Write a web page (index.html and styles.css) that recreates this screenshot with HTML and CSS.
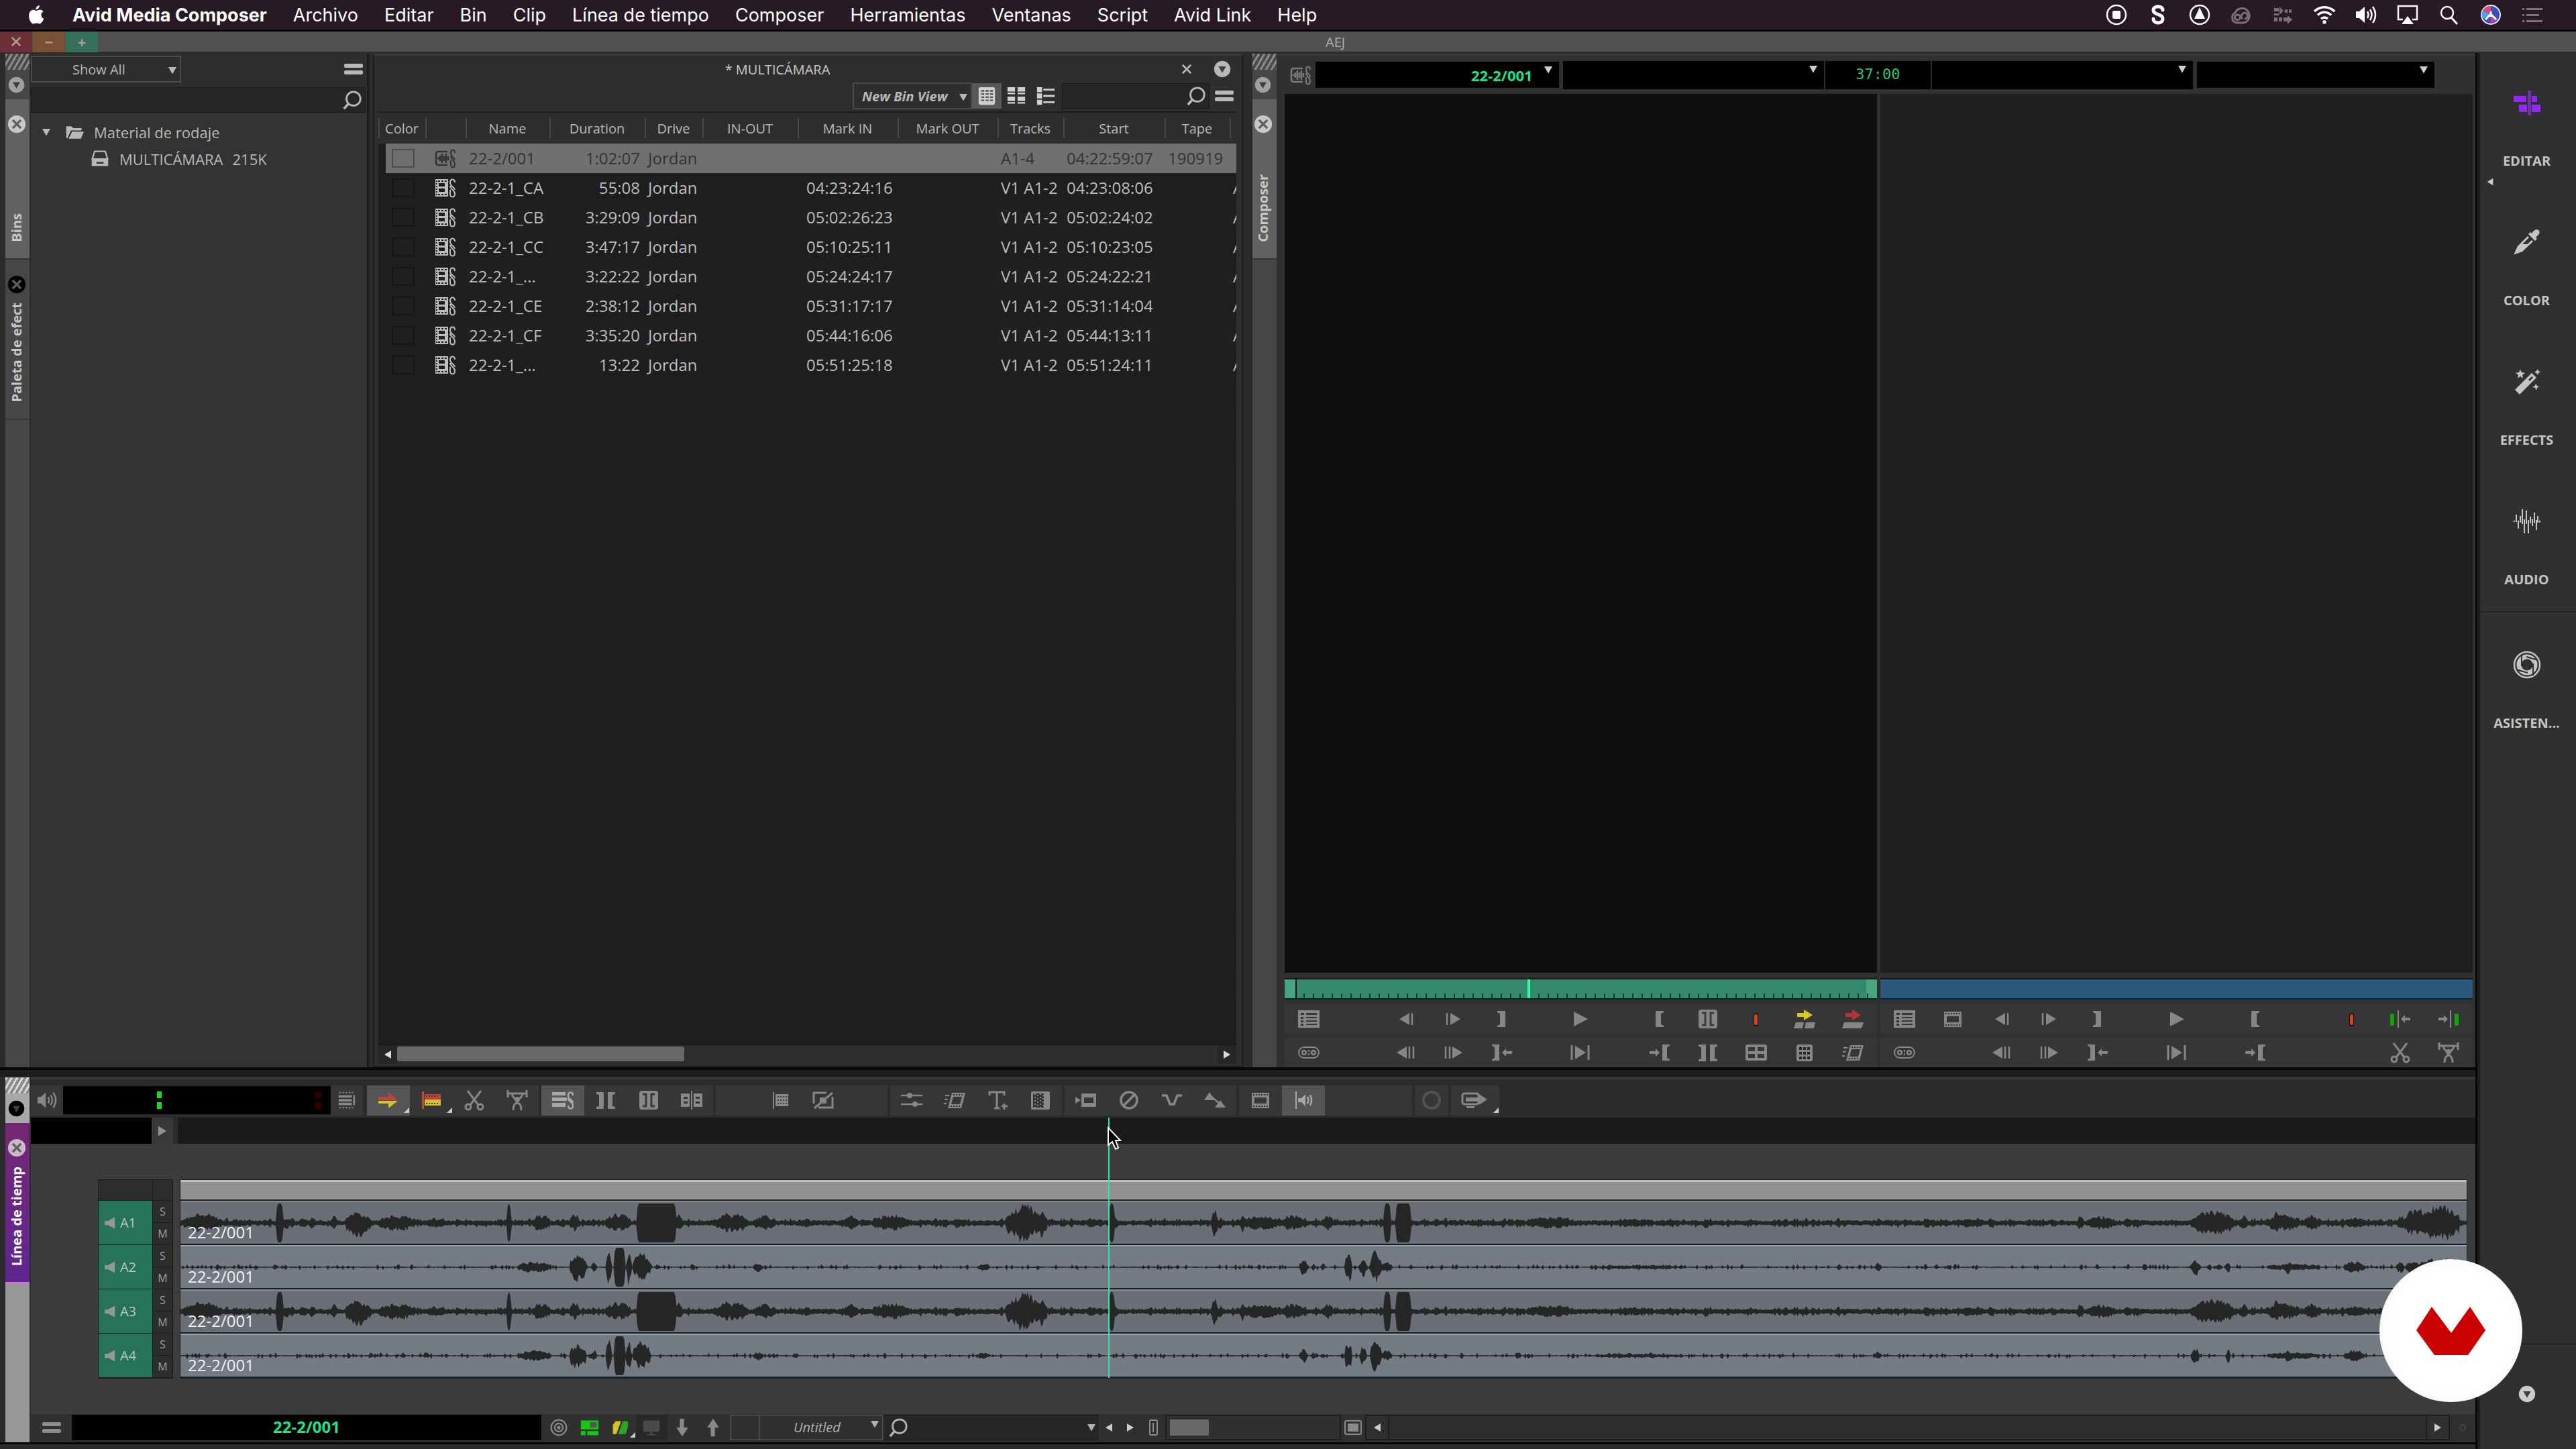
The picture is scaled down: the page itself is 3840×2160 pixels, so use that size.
FILE: index.html
```html
<!DOCTYPE html>
<html lang="es">
<head>
    <meta charset="UTF-8">
    <meta name="viewport" content="width=device-width, initial-scale=1.0">
    <title>Avid Media Composer</title>
    <link rel="stylesheet" href="styles.css">
</head>
<body>
    <!-- icon sheet -->
    <svg class="sheet" aria-hidden="true">
        <symbol id="i-apple" viewBox="0 0 32 32"><path d="M21 2c0 3-2.500 6-5.500 6C15 5 18 2.300 21 2zM16 10c1.500 0 3-1.500 5.500-1.500 2 0 4 1 5 2.800-4.500 2.700-3.700 8.700.8 10.500-1 3-3.500 7.700-6.300 7.700-1.700 0-2.500-1-4.500-1s-3 1-4.500 1C8.500 29.500 5 23 5 17.500c0-5.500 3.300-9 7-9 2 0 3 1.500 4 1.500z"/></symbol>
        <symbol id="i-stop" viewBox="0 0 32 32"><circle cx="16" cy="16" r="14" fill="none" stroke="currentColor" stroke-width="2.500"/><rect x="10" y="10" width="12" height="12" rx="2"/></symbol>
        <symbol id="i-s" viewBox="0 0 32 32"><path d="M23 9c0-7-14-7-14 0 0 8 14 5 14 13 0 8-14 8-14 0" fill="none" stroke="currentColor" stroke-width="5" stroke-linecap="round"/></symbol>
        <symbol id="i-up" viewBox="0 0 32 32"><circle cx="16" cy="16" r="14" fill="none" stroke="currentColor" stroke-width="2.500"/><path d="M16 5l8 17H8z"/></symbol>
        <symbol id="i-cloud" viewBox="0 0 32 32"><path d="M9 28a8 8 0 0 1-2-15A11 11 0 1 1 20 28z" fill="none" stroke="currentColor" stroke-width="3"/><path d="M18 22l-5-5a4 4 0 1 0-3 7c6 0 5-11 11-11a4 4 0 1 1 0 9" fill="none" stroke="currentColor" stroke-width="3"/></symbol>
        <symbol id="i-arrows" viewBox="0 0 32 32"><path d="M3 6h7v5H3zM3 14h7v3H3zM19 8h4v5h-4zM25 8h4v5h-4zM3 20h5v6H3zM10 20h5v6h-5zM17 20h6v-3l7 6-7 7v-4h-6zM11 4l6 6-6 6z"/></symbol>
        <symbol id="i-wifi" viewBox="0 0 32 32"><path d="M1 11a21 21 0 0 1 30 0M6 16.500a14 14 0 0 1 20 0M11 22a7 7 0 0 1 10 0" fill="none" stroke="currentColor" stroke-width="3.500"/><circle cx="16" cy="27" r="2.800"/></symbol>
        <symbol id="i-vol" viewBox="0 0 32 32"><path d="M1 11h5l8-7v24l-8-7H1z"/><path d="M18 11q3 5 0 10M22 8q5 8 0 16M26 4q8 12 0 24" fill="none" stroke="currentColor" stroke-width="2.500"/></symbol>
        <symbol id="i-spk" viewBox="0 0 32 32"><path d="M2 11h8L26 2v28l-16-9H2z"/></symbol>
        <symbol id="i-airplay" viewBox="0 0 32 32"><path d="M9 23H2V3h28v20h-7" fill="none" stroke="currentColor" stroke-width="2.500"/><path d="M16 18l9 12H7z"/></symbol>
        <symbol id="i-find" viewBox="0 0 32 32"><circle cx="13" cy="13" r="9" fill="none" stroke="currentColor" stroke-width="2.500"/><path d="M19 20l9 10" stroke="currentColor" stroke-width="3"/></symbol>
        <symbol id="i-siri" viewBox="0 0 32 32"><circle cx="16" cy="16" r="14" fill="#3d4fb8" stroke="#e8e8f0" stroke-width="2"/><path d="M16 16L4 10a13 13 0 0 1 12-7z" fill="#e0457f"/><path d="M16 16L4 22a13 13 0 0 1 0-12z" fill="#4aa6e8"/><path d="M16 16L27 22a13 13 0 0 1-11 7z" fill="#b0449c"/><path d="M16 15l-8 8M16 11v8M16 15l8 8" stroke="#fff" stroke-width="3"/></symbol>
        <symbol id="i-list" viewBox="0 0 32 32"><path d="M1 6h3v3H1zM7 6h24v3H7zM1 15h3v3H1zM7 15h19v3H7zM1 24h3v3H1zM7 24h24v3H7z"/></symbol>
        <symbol id="i-mag" viewBox="0 0 32 32"><circle cx="18" cy="14" r="11" fill="none" stroke="currentColor" stroke-width="3"/><path d="M10 22l-7 8" stroke="currentColor" stroke-width="4"/></symbol>
        <symbol id="i-burger" viewBox="0 0 32 32"><rect x="2" y="8" width="28" height="6" rx="2"/><rect x="2" y="18" width="28" height="6" rx="2"/></symbol>
        <symbol id="i-down" viewBox="0 0 32 32"><path d="M4 6h24L16 27z"/></symbol>
        <symbol id="i-left" viewBox="0 0 32 32"><path d="M26 4v24L6 16z"/></symbol>
        <symbol id="i-right" viewBox="0 0 32 32"><path d="M6 4v24l20-12z"/></symbol>
        <symbol id="i-discdown" viewBox="0 0 32 32"><circle cx="16" cy="16" r="15"/><path class="cut" d="M9 11h14l-7 12z"/></symbol>
        <symbol id="i-discx" viewBox="0 0 32 32"><circle cx="16" cy="16" r="15"/><path class="cutline" d="M9 9l14 14M23 9L9 23"/></symbol>
        <symbol id="i-x" viewBox="0 0 32 32"><path d="M6 6l20 20M26 6L6 26" stroke="currentColor" stroke-width="4"/></symbol>
        <symbol id="i-folder" viewBox="0 0 32 32"><path d="M2 6h9l3 3h14v4H10L4 26H2z"/><path d="M12 15h20l-5 12H6z"/></symbol>
        <symbol id="i-bin" viewBox="0 0 32 32"><path d="M7 3h18l4 13H3z" fill="none" stroke="currentColor" stroke-width="2.500"/><path d="M2 16h28v12H2z"/><path d="M10 21h12v3H10z" fill="#333"/></symbol>
        <symbol id="i-vtext" viewBox="0 0 32 32"><rect x="3" y="2" width="26" height="28" rx="3"/><path d="M7 8h5M14 8h5M21 8h5M7 13h5M14 13h5M21 13h5M7 18h5M14 18h5M21 18h5M7 23h5M14 23h5M21 23h5" stroke="#555" stroke-width="2.500"/></symbol>
        <symbol id="i-vframe" viewBox="0 0 32 32"><path d="M2 2h12v7H2zM18 2h12v7H18zM2 17h12v7H2zM18 17h12v7H18z"/><path d="M2 12h12M18 12h12M2 27h12M18 27h12" stroke="currentColor" stroke-width="2.500"/></symbol>
        <symbol id="i-vscript" viewBox="0 0 32 32"><path d="M2 2h8v8H2zM2 12h8v8H2zM2 22h8v8H2z"/><path d="M12 6h18M12 16h18M12 26h18" stroke="currentColor" stroke-width="3"/></symbol>
        <symbol id="i-clip" viewBox="0 0 32 32"><path fill-rule="evenodd" d="M1 3h19v26H1zM6 9v5h9V9zM6 17v5h9v-5z"/><path d="M3 5v22" stroke="#222" stroke-width="2" stroke-dasharray="2 2"/><path d="M5 6h14M5 26h14" stroke="#222" stroke-width="2" stroke-dasharray="3 2"/><path d="M30 8c0-6-7-6-7 0 0 7 7 6 7 11M23 13c0 6 7 5 7 12 0 6-7 6-7 0v-6" fill="none" stroke="currentColor" stroke-width="2"/></symbol>
        <symbol id="i-aclip" viewBox="0 0 32 32"><path d="M19 6H5a3 3 0 0 0-3 3v14a3 3 0 0 0 3 3h14" fill="none" stroke="currentColor" stroke-width="2.500"/><path d="M4 16h3M8 12v8M11 9v14M14 12v8M17 9v14M20 13v6" stroke="currentColor" stroke-width="2.500"/><path d="M30 8c0-6-6-6-6 0 0 7 6 6 6 11M24 13c0 6 6 5 6 12 0 6-6 6-6 0v-6" fill="none" stroke="currentColor" stroke-width="2"/></symbol>
        <symbol id="i-menu" viewBox="0 0 32 32"><path fill-rule="evenodd" d="M0 3h32v26H0zM4 7v3h5V7zM12 7v3h16V7zM4 13v3h4v-3zM4 18v3h4v-3zM4 23v3h4v-3zM12 13v2h16v-2zM12 18v2h16v-2zM12 23v2h16v-2z"/></symbol>
        <symbol id="i-stepb" viewBox="0 0 32 32"><path d="M22 7v18L7 16z"/><path d="M26 7v18" stroke="currentColor" stroke-width="2.500"/></symbol>
        <symbol id="i-stepf" viewBox="0 0 32 32"><path d="M11 7v18l15-9z"/><path d="M6 7v18" stroke="currentColor" stroke-width="2.500"/></symbol>
        <symbol id="i-step2b" viewBox="0 0 32 32"><path d="M18 7v18L3 16z"/><path d="M22 7v18M28 7v18" stroke="currentColor" stroke-width="2.500"/></symbol>
        <symbol id="i-step2f" viewBox="0 0 32 32"><path d="M14 7v18l15-9z"/><path d="M4 7v18M10 7v18" stroke="currentColor" stroke-width="2.500"/></symbol>
        <symbol id="i-out" viewBox="0 0 32 32"><path d="M9 4h12v24H9v-2l4-2V8L9 6z"/></symbol>
        <symbol id="i-in" viewBox="0 0 32 32"><path d="M22 4H10v24h12v-2l-4-2V8l4-2z"/></symbol>
        <symbol id="i-play" viewBox="0 0 32 32"><path d="M6 5v22l21-11z"/></symbol>
        <symbol id="i-playio" viewBox="0 0 32 32"><path d="M8 6v20l16-10z"/><path d="M3 5v22M28 5v22" stroke="currentColor" stroke-width="3"/></symbol>
        <symbol id="i-goout" viewBox="0 0 32 32"><path d="M1 4h11v24H1v-2l4-2V8L1 6z"/><path d="M16 16l6-6v4h9v4h-9v4z"/></symbol>
        <symbol id="i-goin" viewBox="0 0 32 32"><path d="M31 4H20v24h11v-2l-4-2V8l4-2z"/><path d="M16 16l-6-6v4H1v4h9v4z"/></symbol>
        <symbol id="i-mark" viewBox="0 0 32 32"><rect x="2" y="2" width="28" height="28" rx="4"/><path d="M7 7h5v18H7M25 7h-5v18h5" fill="none" stroke="#3a3a3a" stroke-width="3"/></symbol>
        <symbol id="i-clear" viewBox="0 0 32 32"><path d="M2 4h11v25H2v-3l4-1V8L2 7zM30 4H19v25h11v-3l-4-1V8l4-1z"/></symbol>
        <symbol id="i-marker" viewBox="0 0 32 32"><rect x="12" y="7" width="7" height="20" rx="3" fill="#111"/><rect x="13" y="9" width="5" height="16" rx="2" fill="#d8401a"/></symbol>
        <symbol id="i-splice" viewBox="0 0 32 32"><path d="M5 7h10V2l13 8-13 8v-5H5z" fill="#d8c81e"/><path d="M3 21h12l-2 9H0zM18 21h14l-2 9H16z"/></symbol>
        <symbol id="i-over" viewBox="0 0 32 32"><path d="M5 7h10V2l13 8-13 8v-5H5z" fill="#b83434"/><path d="M3 21h29l-3 9H0z"/></symbol>
        <symbol id="i-gang" viewBox="0 0 32 32"><rect x="1" y="8" width="30" height="16" rx="8" fill="none" stroke="currentColor" stroke-width="2"/><circle cx="9" cy="16" r="3" fill="none" stroke="currentColor" stroke-width="2.500"/><circle cx="23" cy="16" r="3" fill="none" stroke="currentColor" stroke-width="2.500"/><path d="M15 12h2v3h-2zM15 17h2v3h-2z"/></symbol>
        <symbol id="i-quad" viewBox="0 0 32 32"><path fill-rule="evenodd" d="M3 4h26q3 0 3 3v18q0 3-3 3H3q-3 0-3-3V7q0-3 3-3zM4 8v6h10V8zM18 8v6h10V8zM4 18v6h10v-6zM18 18v6h10v-6z"/></symbol>
        <symbol id="i-nine" viewBox="0 0 32 32"><rect x="4" y="4" width="24" height="25" rx="3"/><path d="M8 10h16M8 17h16M8 24h16" stroke="#262626" stroke-width="4" stroke-dasharray="4 2"/></symbol>
        <symbol id="i-motion" viewBox="0 0 32 32"><path fill-rule="evenodd" d="M12 5h20l-6 23H6zM14 11l-3 11h13l3-11z"/><path d="M14 8h15M10 25h15" stroke="#333" stroke-width="2" stroke-dasharray="2 2"/><path d="M2 9h6M1 15h5M0 21h4" stroke="currentColor" stroke-width="2"/></symbol>
        <symbol id="i-film" viewBox="0 0 32 32"><path fill-rule="evenodd" d="M3 5h26v23H3zM7 12v9h18v-9z"/><path d="M5 8h22M5 25h22" stroke="#333" stroke-width="2" stroke-dasharray="2 2"/></symbol>
        <symbol id="i-trimout" viewBox="0 0 32 32"><rect x="1" y="8" width="6" height="18" rx="3" fill="#12a512"/><path d="M12 3h2v26h-2zM17 16l6-6v4h8v4h-8v4z"/></symbol>
        <symbol id="i-trimin" viewBox="0 0 32 32"><rect x="25" y="8" width="6" height="18" rx="3" fill="#12a512"/><path d="M18 3h2v26h-2zM15 16l-6-6v4H1v4h8v4z"/></symbol>
        <symbol id="i-cut" viewBox="0 0 32 32"><path d="M6 2l16 21M26 2L10 23" stroke="currentColor" stroke-width="3"/><circle cx="7" cy="26" r="4" fill="none" stroke="currentColor" stroke-width="3"/><circle cx="25" cy="26" r="4" fill="none" stroke="currentColor" stroke-width="3"/></symbol>
        <symbol id="i-lift" viewBox="0 0 32 32"><path d="M2 1v11M30 1v11M1 6h30" stroke="currentColor" stroke-width="3"/><path d="M8 6q1 7 8 9 7-2 8-9M10 31q0-10 6-11 6 1 6 11" fill="none" stroke="currentColor" stroke-width="3"/><circle cx="16" cy="15" r="4"/></symbol>
        <symbol id="i-tracks" viewBox="0 0 32 32"><path d="M3 8h21v4H3zM3 14h21v4H3zM3 20h21v4H3zM26 8h3v16h-3z"/><path d="M4 4h22M4 28h22" stroke="currentColor" stroke-width="2" stroke-dasharray="3 2"/></symbol>
        <symbol id="i-smart" viewBox="0 0 32 32"><path d="M1 11h15V4l14 12H1z" fill="#b84444"/><path d="M1 17h29L16 28v-7H1z" fill="#d4c224"/></symbol>
        <symbol id="i-seg" viewBox="0 0 32 32"><path d="M2 3h3v26H2z" fill="#c05030"/><path d="M6 7h24v8H6z" fill="#b84444"/><path d="M6 15h24v9H6z" fill="#d4c224"/><path d="M8 10h20M8 21h20" stroke="#5a3020" stroke-width="2" stroke-dasharray="2 2"/></symbol>
        <symbol id="i-link" viewBox="0 0 32 32"><path d="M0 4h20v5H0zM0 12h22v5H0zM0 20h20v6H0z"/><path d="M31 9c0-6-7-6-7 0 0 7 7 6 7 11M24 13c0 6 7 5 7 11 0 6-7 6-7 0" fill="none" stroke="currentColor" stroke-width="2.500"/></symbol>
        <symbol id="i-split" viewBox="0 0 32 32"><path fill-rule="evenodd" d="M0 6h13v20H0zM4 11v3h6v-3zM4 18v3h6v-3zM19 6h13v20H19zM22 11v3h6v-3zM22 18v3h6v-3zM15 2h2v28h-2z"/></symbol>
        <symbol id="i-freeze" viewBox="0 0 32 32"><path d="M5 4h2v25H5zM9 7h19v18H9z"/><path d="M12 11h14M12 16h14M12 21h14" stroke="#444" stroke-width="2" stroke-dasharray="2 2"/></symbol>
        <symbol id="i-fade" viewBox="0 0 32 32"><path d="M21 5H2v16M30 11v16H9M3 28L30 5" fill="none" stroke="currentColor" stroke-width="3"/><path d="M11 12h10v9H11z"/></symbol>
        <symbol id="i-sliders" viewBox="0 0 32 32"><path d="M0 9h32M0 22h32" stroke="currentColor" stroke-width="2.500"/><circle cx="13" cy="9" r="4"/><circle cx="21" cy="22" r="4"/></symbol>
        <symbol id="i-title" viewBox="0 0 32 32"><path d="M4 9V4h22v5M15 4v24M11 28h8M26 21v9M22 25h9" fill="none" stroke="currentColor" stroke-width="3"/></symbol>
        <symbol id="i-matte" viewBox="0 0 32 32"><rect x="2" y="3" width="28" height="27" rx="2"/><path d="M5 6h16v21H5z" fill="#333"/><path d="M8 6v21M12 8v19M16 6v21M20 8v19" stroke="currentColor" stroke-width="2" stroke-dasharray="2 3"/></symbol>
        <symbol id="i-cam" viewBox="0 0 32 32"><path fill-rule="evenodd" d="M0 11l8 5-8 5zM9 6h22v20H9zM13 12v8h14v-8z"/></symbol>
        <symbol id="i-no" viewBox="0 0 32 32"><circle cx="16" cy="16" r="12" fill="none" stroke="currentColor" stroke-width="3.500"/><path d="M24 8L8 24" stroke="currentColor" stroke-width="3.500"/></symbol>
        <symbol id="i-v" viewBox="0 0 32 32"><path d="M1 9h7l5 13h6l5-13h7" fill="none" stroke="currentColor" stroke-width="3.500"/></symbol>
        <symbol id="i-tri" viewBox="0 0 32 32"><path d="M8 4l8 12H0zM24 16l8 11H16z"/><path d="M10 10l14 12" stroke="currentColor" stroke-width="2.500"/></symbol>
        <symbol id="i-scrub" viewBox="0 0 32 32"><path d="M4 3h2v26H4zM8 13h5l6-6v18l-6-6H8z"/><path d="M22 11q3 5 0 10M26 8q4 8 0 16" fill="none" stroke="currentColor" stroke-width="2.500"/></symbol>
        <symbol id="i-ring" viewBox="0 0 32 32"><circle cx="16" cy="16" r="12" fill="none" stroke="currentColor" stroke-width="4"/></symbol>
        <symbol id="i-export" viewBox="0 0 40 32"><rect x="1" y="6" width="24" height="16" rx="3" fill="none" stroke="currentColor" stroke-width="3"/><path d="M6 12h20V7l12 8-12 8v-5H6zM7 25h12v3H7z"/></symbol>
        <symbol id="i-target" viewBox="0 0 32 32"><circle cx="16" cy="16" r="13" fill="none" stroke="currentColor" stroke-width="2.500"/><circle cx="16" cy="16" r="7" fill="none" stroke="currentColor" stroke-width="2.500"/><circle cx="16" cy="16" r="3"/></symbol>
        <symbol id="i-render" viewBox="0 0 32 32"><path d="M1 4h30v15H1zM1 22h8v7H1zM12 22h19v7H12z" fill="#14c814"/><path d="M17 7h11v9H17z" fill="#555"/></symbol>
        <symbol id="i-video" viewBox="0 0 32 32"><path d="M8 5h9l-8 22H3V11z" fill="#d4c224"/><path d="M20 5h8l1 8-4 14H12z" fill="#2aa52a"/></symbol>
        <symbol id="i-screen" viewBox="0 0 32 32"><rect x="2" y="4" width="28" height="19" rx="3"/><path d="M14 22h4v5h6v2H8v-2h6z"/></symbol>
        <symbol id="i-adown" viewBox="0 0 32 32"><path d="M12 1h7v15h7l-10 15L6 16h6z"/></symbol>
        <symbol id="i-aup" viewBox="0 0 32 32"><path d="M12 31h7V16h7L16 1 6 16h6z"/></symbol>
        <symbol id="i-zoomout" viewBox="0 0 32 32"><rect x="11" y="5" width="11" height="22" rx="2" fill="none" stroke="currentColor" stroke-width="2"/><path d="M16 9v14" stroke="currentColor" stroke-width="2"/></symbol>
        <symbol id="i-zoomin" viewBox="0 0 32 32"><rect x="4" y="6" width="24" height="20" rx="2" fill="none" stroke="currentColor" stroke-width="2"/><rect x="8" y="10" width="16" height="12"/></symbol>
        <symbol id="i-edit" viewBox="0 0 42 42"><path d="M1 11h19v9H1zM28 11h8v9h-8zM9 24h12v11H9zM28 24h13v11H28z" fill="#9329f5"/><path d="M22 3h5v37h-5z" fill="#6c34a8"/></symbol>
        <symbol id="i-drop" viewBox="0 0 42 42"><path d="M30 5q5-5 8-2 4 3-1 8l-3 3 2 2-3 3-10-10 3-3 2 2z"/><path d="M23 13L8 28l-4 9 9-3 16-15" fill="none" stroke="currentColor" stroke-width="3"/><path d="M11 24h12L13 34l-10 4z"/></symbol>
        <symbol id="i-wand" viewBox="0 0 42 42"><path fill-rule="evenodd" d="M3 33L28 8l7 7-25 25zM28 13l-5 5 2 2 5-5z"/><path d="M11 3l2 4 5 1-4 3 1 5-4-3-4 3 1-5-4-3 5-1zM37 2l1 3 3 1-3 2-1 3-2-3-3-1 3-2zM34 24l2 3 3 1-3 2-1 4-2-4-4-1 4-2z"/></symbol>
        <symbol id="i-audio" viewBox="0 0 42 42"><path d="M1 21h2M5 11v11M8 20v12M11 13v10M14 3v22M17 18v21M20 5v20M23 19v20M26 14v10M29 18v10M32 8v16M35 19v15M37 13v10M40 20v3" stroke="currentColor" stroke-width="2"/></symbol>
        <symbol id="i-iris" viewBox="0 0 42 42"><circle cx="21" cy="21" r="19" fill="none" stroke="currentColor" stroke-width="2.500"/><circle cx="21" cy="21" r="12" fill="none" stroke="currentColor" stroke-width="7"/><path d="M13 5v18M5 28l17 5M30 37V19M37 14l-17-5" stroke="#303030" stroke-width="2"/></symbol>
    </svg>

    <header class="menubar">
        <svg class="apple"><use href="#i-apple"/></svg>
        <nav class="menus">
            <a href="#" class="app">Avid Media Composer</a>
            <a href="#">Archivo</a>
            <a href="#">Editar</a>
            <a href="#">Bin</a>
            <a href="#">Clip</a>
            <a href="#">Línea de tiempo</a>
            <a href="#">Composer</a>
            <a href="#">Herramientas</a>
            <a href="#">Ventanas</a>
            <a href="#">Script</a>
            <a href="#">Avid Link</a>
            <a href="#">Help</a>
        </nav>
        <div class="status">
            <svg><use href="#i-stop"/></svg>
            <svg><use href="#i-s"/></svg>
            <svg><use href="#i-up"/></svg>
            <svg class="dim"><use href="#i-cloud"/></svg>
            <svg class="dim"><use href="#i-arrows"/></svg>
            <svg><use href="#i-wifi"/></svg>
            <svg><use href="#i-vol"/></svg>
            <svg><use href="#i-airplay"/></svg>
            <svg><use href="#i-find"/></svg>
            <svg><use href="#i-siri"/></svg>
            <svg class="dim"><use href="#i-list"/></svg>
        </div>
    </header>

    <div class="titlebar">
        <div class="winbtns">
            <button class="close" aria-label="Cerrar"><svg><use href="#i-x"/></svg></button>
            <button class="min" aria-label="Minimizar">−</button>
            <button class="max" aria-label="Maximizar">+</button>
        </div>
        <span class="title">AEJ</span>
    </div>

    <div class="shell">
        <main class="work">
            <div class="panes">
                <div class="rail">
                    <div class="grip"></div>
                    <div class="railmenu"><svg><use href="#i-discdown"/></svg></div>
                    <div class="tab active"><svg><use href="#i-discx"/></svg><span>Bins</span></div>
                    <div class="tab"><svg class="black"><use href="#i-discx"/></svg><span>Paleta de efect</span></div>
                </div>

                <section class="bins">
                    <div class="binbar">
                        <div class="drop showall">
                            <select aria-label="Filtro"><option>Show All</option></select>
                            <svg><use href="#i-down"/></svg>
                        </div>
                        <button class="icon" aria-label="Menú"><svg><use href="#i-burger"/></svg></button>
                    </div>
                    <label class="search"><input type="text" aria-label="Buscar bins"><svg><use href="#i-mag"/></svg></label>
                    <ul class="tree">
                        <li><svg class="tri"><use href="#i-down"/></svg><svg><use href="#i-folder"/></svg>Material de rodaje</li>
                        <li class="child"><svg><use href="#i-bin"/></svg>MULTICÁMARA<span>215K</span></li>
                    </ul>
                </section>

                <section class="binwin">
                    <div class="bintitle">
                        <h2>* MULTICÁMARA</h2>
                        <button class="icon" aria-label="Cerrar bin"><svg class="small"><use href="#i-x"/></svg></button>
                        <button class="icon" aria-label="Opciones"><svg class="mid"><use href="#i-discdown"/></svg></button>
                    </div>
                    <div class="viewbar">
                        <div class="drop view">
                            <select aria-label="Vista"><option>New Bin View</option></select>
                            <svg><use href="#i-down"/></svg>
                        </div>
                        <button class="vbtn on" aria-label="Texto"><svg><use href="#i-vtext"/></svg></button>
                        <button class="vbtn" aria-label="Fotogramas"><svg><use href="#i-vframe"/></svg></button>
                        <button class="vbtn" aria-label="Guion"><svg><use href="#i-vscript"/></svg></button>
                        <label class="search binsearch"><input type="text" aria-label="Buscar clips"><svg><use href="#i-mag"/></svg></label>
                        <button class="icon" aria-label="Menú del bin"><svg><use href="#i-burger"/></svg></button>
                    </div>
                    <div class="cliplist">
                        <table>
                            <colgroup>
                                <col class="c-color"><col class="c-icon"><col class="c-name"><col class="c-dur"><col class="c-drive"><col class="c-io"><col class="c-mark"><col class="c-mark"><col class="c-tracks"><col class="c-start"><col class="c-tape"><col>
                            </colgroup>
                            <thead>
                                <tr><th>Color</th><th></th><th>Name</th><th>Duration</th><th>Drive</th><th>IN-OUT</th><th>Mark IN</th><th>Mark OUT</th><th>Tracks</th><th>Start</th><th>Tape</th><th></th></tr>
                            </thead>
                            <tbody>
                                <tr class="sel"><td><i></i></td><td><svg><use href="#i-aclip"/></svg></td><td>22-2/001</td><td class="num">1:02:07</td><td>Jordan</td><td></td><td></td><td></td><td>A1-4</td><td>04:22:59:07</td><td>190919</td><td></td></tr>
                                <tr><td><i></i></td><td><svg><use href="#i-clip"/></svg></td><td>22-2-1_CA</td><td class="num">55:08</td><td>Jordan</td><td></td><td class="mark">04:23:24:16</td><td></td><td>V1 A1-2</td><td>04:23:08:06</td><td></td><td>A</td></tr>
                                <tr><td><i></i></td><td><svg><use href="#i-clip"/></svg></td><td>22-2-1_CB</td><td class="num">3:29:09</td><td>Jordan</td><td></td><td class="mark">05:02:26:23</td><td></td><td>V1 A1-2</td><td>05:02:24:02</td><td></td><td>A</td></tr>
                                <tr><td><i></i></td><td><svg><use href="#i-clip"/></svg></td><td>22-2-1_CC</td><td class="num">3:47:17</td><td>Jordan</td><td></td><td class="mark">05:10:25:11</td><td></td><td>V1 A1-2</td><td>05:10:23:05</td><td></td><td>A</td></tr>
                                <tr><td><i></i></td><td><svg><use href="#i-clip"/></svg></td><td>22-2-1_...</td><td class="num">3:22:22</td><td>Jordan</td><td></td><td class="mark">05:24:24:17</td><td></td><td>V1 A1-2</td><td>05:24:22:21</td><td></td><td>A</td></tr>
                                <tr><td><i></i></td><td><svg><use href="#i-clip"/></svg></td><td>22-2-1_CE</td><td class="num">2:38:12</td><td>Jordan</td><td></td><td class="mark">05:31:17:17</td><td></td><td>V1 A1-2</td><td>05:31:14:04</td><td></td><td>A</td></tr>
                                <tr><td><i></i></td><td><svg><use href="#i-clip"/></svg></td><td>22-2-1_CF</td><td class="num">3:35:20</td><td>Jordan</td><td></td><td class="mark">05:44:16:06</td><td></td><td>V1 A1-2</td><td>05:44:13:11</td><td></td><td>A</td></tr>
                                <tr><td><i></i></td><td><svg><use href="#i-clip"/></svg></td><td>22-2-1_...</td><td class="num">13:22</td><td>Jordan</td><td></td><td class="mark">05:51:25:18</td><td></td><td>V1 A1-2</td><td>05:51:24:11</td><td></td><td>A</td></tr>
                            </tbody>
                        </table>
                    </div>
                    <div class="hscroll">
                        <button aria-label="Izquierda"><svg><use href="#i-left"/></svg></button>
                        <div class="track"><div class="thumb"></div></div>
                        <button aria-label="Derecha"><svg><use href="#i-right"/></svg></button>
                    </div>
                </section>

                <div class="rail second">
                    <div class="grip"></div>
                    <div class="railmenu"><svg><use href="#i-discdown"/></svg></div>
                    <div class="tab active"><svg><use href="#i-discx"/></svg><span>Composer</span></div>
                </div>

                <section class="composer">
                    <div class="comphead">
                        <svg class="clipicon"><use href="#i-aclip"/></svg>
                        <div class="drop box b1"><select class="green" aria-label="Clip"><option>22-2/001</option></select><svg><use href="#i-down"/></svg></div>
                        <div class="drop box tall b2"><select aria-label="Pista de origen"><option></option></select><svg><use href="#i-down"/></svg></div>
                        <output class="tc">37:00</output>
                        <div class="drop box tall b3"><select aria-label="Pista de secuencia"><option></option></select><svg><use href="#i-down"/></svg></div>
                        <div class="drop box b4"><select aria-label="Secuencia"><option></option></select><svg><use href="#i-down"/></svg></div>
                    </div>
                    <div class="monitors">
                        <div class="monitor">
                            <div class="screen src"></div>
                            <div class="posbar green-bar"><span class="pos"></span></div>
                            <div class="btnrow">
                                <button aria-label="Menú rápido"><svg><use href="#i-menu"/></svg></button>
                                <span></span>
                                <button aria-label="Paso atrás"><svg><use href="#i-stepb"/></svg></button>
                                <button aria-label="Paso adelante"><svg><use href="#i-stepf"/></svg></button>
                                <button aria-label="Marcar salida"><svg><use href="#i-out"/></svg></button>
                                <button aria-label="Reproducir"><svg><use href="#i-play"/></svg></button>
                                <button aria-label="Marcar entrada"><svg><use href="#i-in"/></svg></button>
                                <button aria-label="Marcar clip"><svg><use href="#i-mark"/></svg></button>
                                <button aria-label="Marcador"><svg><use href="#i-marker"/></svg></button>
                                <button aria-label="Insertar"><svg><use href="#i-splice"/></svg></button>
                                <button aria-label="Sobrescribir"><svg><use href="#i-over"/></svg></button>
                            </div>
                            <div class="btnrow">
                                <button aria-label="Agrupar"><svg><use href="#i-gang"/></svg></button>
                                <span></span>
                                <button aria-label="Diez atrás"><svg><use href="#i-step2b"/></svg></button>
                                <button aria-label="Diez adelante"><svg><use href="#i-step2f"/></svg></button>
                                <button aria-label="Ir a salida"><svg><use href="#i-goout"/></svg></button>
                                <button aria-label="Reproducir entre marcas"><svg><use href="#i-playio"/></svg></button>
                                <button aria-label="Ir a entrada"><svg><use href="#i-goin"/></svg></button>
                                <button aria-label="Borrar marcas"><svg><use href="#i-clear"/></svg></button>
                                <button aria-label="Cuatro cámaras"><svg><use href="#i-quad"/></svg></button>
                                <button aria-label="Nueve cámaras"><svg><use href="#i-nine"/></svg></button>
                                <button aria-label="Efecto de movimiento"><svg><use href="#i-motion"/></svg></button>
                            </div>
                        </div>
                        <div class="monitor">
                            <div class="screen rec"></div>
                            <div class="posbar blue-bar"></div>
                            <div class="btnrow">
                                <button aria-label="Menú rápido"><svg><use href="#i-menu"/></svg></button>
                                <button aria-label="Película"><svg><use href="#i-film"/></svg></button>
                                <button aria-label="Paso atrás"><svg><use href="#i-stepb"/></svg></button>
                                <button aria-label="Paso adelante"><svg><use href="#i-stepf"/></svg></button>
                                <button aria-label="Marcar salida"><svg><use href="#i-out"/></svg></button>
                                <button aria-label="Reproducir"><svg><use href="#i-play"/></svg></button>
                                <button aria-label="Marcar entrada"><svg><use href="#i-in"/></svg></button>
                                <span></span>
                                <button aria-label="Marcador"><svg><use href="#i-marker"/></svg></button>
                                <button aria-label="Recortar cola"><svg><use href="#i-trimout"/></svg></button>
                                <button aria-label="Recortar cabeza"><svg><use href="#i-trimin"/></svg></button>
                            </div>
                            <div class="btnrow">
                                <button aria-label="Agrupar"><svg><use href="#i-gang"/></svg></button>
                                <span></span>
                                <button aria-label="Diez atrás"><svg><use href="#i-step2b"/></svg></button>
                                <button aria-label="Diez adelante"><svg><use href="#i-step2f"/></svg></button>
                                <button aria-label="Ir a salida"><svg><use href="#i-goout"/></svg></button>
                                <button aria-label="Reproducir entre marcas"><svg><use href="#i-playio"/></svg></button>
                                <button aria-label="Ir a entrada"><svg><use href="#i-goin"/></svg></button>
                                <span></span>
                                <span></span>
                                <button aria-label="Extraer"><svg><use href="#i-cut"/></svg></button>
                                <button aria-label="Levantar"><svg><use href="#i-lift"/></svg></button>
                            </div>
                        </div>
                    </div>
                </section>
            </div>

            <div class="timeline">
                <div class="rail light">
                    <div class="grip"></div>
                    <div class="railmenu"><svg><use href="#i-discdown"/></svg></div>
                    <div class="tab purple"><svg><use href="#i-discx"/></svg><span>Línea de tiemp</span></div>
                </div>
                <section class="tlmain">
                    <div class="tools">
                        <button class="spk" aria-label="Audio"><svg><use href="#i-vol"/></svg></button>
                        <div class="meter"><span class="lvl"></span><span class="peak"></span></div>
                        <button class="spk" aria-label="Pistas"><svg><use href="#i-tracks"/></svg></button>
                        <div class="group first">
                            <button class="on more" aria-label="Herramienta inteligente"><svg><use href="#i-smart"/></svg></button>
                            <button class="more" aria-label="Segmento"><svg><use href="#i-seg"/></svg></button>
                            <button aria-label="Extraer"><svg><use href="#i-cut"/></svg></button>
                            <button aria-label="Levantar"><svg><use href="#i-lift"/></svg></button>
                        </div>
                        <div class="group">
                            <button class="on" aria-label="Selección vinculada"><svg><use href="#i-link"/></svg></button>
                            <button aria-label="Borrar marcas"><svg><use href="#i-clear"/></svg></button>
                            <button aria-label="Marcar clip"><svg><use href="#i-mark"/></svg></button>
                            <button aria-label="Añadir edición"><svg><use href="#i-split"/></svg></button>
                        </div>
                        <div class="group pad">
                            <button aria-label="Congelar"><svg><use href="#i-freeze"/></svg></button>
                            <button aria-label="Fundido"><svg><use href="#i-fade"/></svg></button>
                        </div>
                        <div class="group">
                            <button aria-label="Editor de efectos"><svg><use href="#i-sliders"/></svg></button>
                            <button aria-label="Movimiento"><svg><use href="#i-motion"/></svg></button>
                            <button aria-label="Título"><svg><use href="#i-title"/></svg></button>
                            <button aria-label="Mate"><svg><use href="#i-matte"/></svg></button>
                        </div>
                        <div class="group">
                            <button aria-label="Cámara"><svg><use href="#i-cam"/></svg></button>
                            <button aria-label="Quitar efecto"><svg><use href="#i-no"/></svg></button>
                            <button aria-label="Transición"><svg><use href="#i-v"/></svg></button>
                            <button aria-label="Fotogramas clave"><svg><use href="#i-tri"/></svg></button>
                        </div>
                        <div class="group tail">
                            <button aria-label="Película"><svg><use href="#i-film"/></svg></button>
                            <button class="on" aria-label="Scrub de audio"><svg><use href="#i-scrub"/></svg></button>
                        </div>
                        <div class="group"><button class="narrow" aria-label="Grabar"><svg><use href="#i-ring"/></svg></button></div>
                        <div class="group"><button class="more wide" aria-label="Exportar"><svg><use href="#i-export"/></svg></button></div>
                    </div>

                    <div class="ruler">
                        <div class="tcbox"></div>
                        <button aria-label="Mostrar códigos"><svg><use href="#i-right"/></svg></button>
                        <div class="scale"></div>
                    </div>

                    <div class="tracks">
                        <div class="heads">
                            <div class="head blank"><span></span><span></span></div>
                            <div class="head"><button class="name"><svg><use href="#i-spk"/></svg>A1</button><button>S</button><button>M</button></div>
                            <div class="head"><button class="name"><svg><use href="#i-spk"/></svg>A2</button><button>S</button><button>M</button></div>
                            <div class="head"><button class="name"><svg><use href="#i-spk"/></svg>A3</button><button>S</button><button>M</button></div>
                            <div class="head"><button class="name"><svg><use href="#i-spk"/></svg>A4</button><button>S</button><button>M</button></div>
                        </div>
                        <div class="lanes">
                            <div class="lane tcstrip"></div>
                            <div class="lane dark" data-wave="loud" data-seed="3"><span>22-2/001</span></div>
                            <div class="lane" data-wave="soft" data-seed="8"><span>22-2/001</span></div>
                            <div class="lane dark" data-wave="loud" data-seed="3"><span>22-2/001</span></div>
                            <div class="lane" data-wave="soft" data-seed="5"><span>22-2/001</span></div>
                            <div class="playhead"></div>
                            <svg class="cursor" viewBox="0 0 22 36"><path d="M2 2v26l6-5 5 11 4-2-4-11h7z" fill="#000" stroke="#fff" stroke-width="2"/></svg>
                        </div>
                    </div>

                    <div class="bottombar">
                        <button class="burger" aria-label="Menú de línea de tiempo"><svg><use href="#i-burger"/></svg></button>
                        <div class="seqname">22-2/001</div>
                        <div class="bbtns">
                            <button aria-label="Enfoque"><svg><use href="#i-target"/></svg></button>
                            <button aria-label="Render"><svg><use href="#i-render"/></svg></button>
                            <button class="more" aria-label="Calidad"><svg><use href="#i-video"/></svg></button>
                            <button class="off" aria-label="Pantalla"><svg><use href="#i-screen"/></svg></button>
                            <button aria-label="Bajar"><svg><use href="#i-adown"/></svg></button>
                            <button aria-label="Subir"><svg><use href="#i-aup"/></svg></button>
                        </div>
                        <div class="swatch"></div>
                        <div class="drop tlview"><select aria-label="Vista de línea de tiempo"><option>Untitled</option></select><svg><use href="#i-down"/></svg></div>
                        <label class="search tlsearch"><svg><use href="#i-mag"/></svg><input type="text" aria-label="Buscar en línea de tiempo"><svg class="tri"><use href="#i-down"/></svg></label>
                        <div class="steps">
                            <button aria-label="Anterior"><svg><use href="#i-left"/></svg></button>
                            <button aria-label="Siguiente"><svg><use href="#i-right"/></svg></button>
                        </div>
                        <button class="zoombtn" aria-label="Alejar"><svg><use href="#i-zoomout"/></svg></button>
                        <div class="zoombar"><div class="thumb"></div></div>
                        <button class="zoombtn" aria-label="Acercar"><svg><use href="#i-zoomin"/></svg></button>
                        <div class="tlscroll">
                            <button aria-label="Izquierda"><svg><use href="#i-left"/></svg></button>
                            <div class="track"></div>
                            <button aria-label="Derecha"><svg><use href="#i-right"/></svg></button>
                        </div>
                        <span class="knob"></span>
                    </div>
                </section>
            </div>
        </main>

        <aside class="tasks">
            <button><svg><use href="#i-edit"/></svg>EDITAR</button>
            <button><svg><use href="#i-drop"/></svg>COLOR</button>
            <button><svg><use href="#i-wand"/></svg>EFFECTS</button>
            <button><svg><use href="#i-audio"/></svg>AUDIO</button>
            <button class="line"><svg><use href="#i-iris"/></svg>ASISTEN...</button>
            <svg class="pointer"><use href="#i-left"/></svg>
            <div class="more-tasks"><svg><use href="#i-discdown"/></svg></div>
        </aside>
    </div>

    <div class="badge">
        <svg viewBox="0 0 104 72"><path d="M0 35L23 0l29 39L80 0l23 35-26 37H27z" fill="#cb0000"/></svg>
    </div>

    <script src="script.js"></script>
</body>
</html>
```

FILE: styles.css
```css
* {
    box-sizing: border-box;
}
body {
    margin: 0;
    min-height: 100vh;
    display: flex;
    flex-direction: column;
    background: #1e1e1e;
    color: #b8b8b8;
    font-family: "Open Sans", "Noto Sans", sans-serif;
    font-size: 22px;
}
button, select, input {
    font: inherit;
    color: inherit;
    background: none;
    border: 0;
    border-radius: 0;
    margin: 0;
    padding: 0;
}
button {
    display: flex;
    align-items: center;
    justify-content: center;
}
svg {
    width: 32px;
    height: 32px;
    fill: currentColor;
    flex: none;
}
.sheet {
    position: absolute;
    width: 0;
    height: 0;
}

/* system menu bar */
.menubar {
    height: 47px;
    display: flex;
    align-items: center;
    background: #281a24;
    border-bottom: 3px solid #050305;
    color: #fff;
    font-family: Inter, sans-serif;
    font-size: 27px;
}
.apple {
    margin: 0 26px 0 38px;
}
.menus {
    display: flex;
    gap: 39px;
    margin-left: 12px;
}
.menus a {
    color: inherit;
    text-decoration: none;
    white-space: nowrap;
}
.menus .app {
    font-weight: 700;
}
.status {
    margin-left: auto;
    margin-right: 34px;
    display: flex;
}
.status svg {
    margin: 0 15px;
}
.status .dim {
    color: #7b7078;
}

/* window title */
.titlebar {
    height: 32px;
    display: flex;
    align-items: center;
    background: #515151;
    border-bottom: 2px solid #2e2e2e;
}
.winbtns {
    display: flex;
    gap: 1px;
}
.winbtns button {
    width: 48px;
    height: 31px;
    font-size: 22px;
    font-weight: 700;
    color: #a89c94;
}
.winbtns svg {
    width: 20px;
    height: 20px;
}
.close { background: #6a3036; }
.min { background: #7a5034; }
.max { background: #35705a; }
.title {
    flex: 1;
    padding-left: 1830px;
    font-size: 20px;
    color: #b0b0b0;
}

.shell {
    flex: 1;
    display: flex;
}
.work {
    flex: 1;
    min-width: 0;
    display: flex;
    flex-direction: column;
    background: #2b2b2b;
    border-right: 3px solid #050505;
}
.panes {
    flex: 1;
    display: flex;
    padding: 1px 0 0 8px;
    border-bottom: 4px solid #060606;
}

/* vertical tab rails */
.rail {
    width: 36px;
    margin-right: 2px;
    background: #464646;
    display: flex;
    flex-direction: column;
}
.second {
    margin-right: 0;
    margin-left: 14px;
}
.grip {
    height: 24px;
    background: repeating-linear-gradient(120deg, #8a8a8a 0 3px, #4a4a4a 3px 7px);
}
.railmenu {
    height: 44px;
    display: flex;
    align-items: center;
    justify-content: center;
    color: #a0a0a0;
}
.railmenu svg {
    width: 25px;
    height: 25px;
    margin-right: 4px;
}
.cut {
    fill: #404040;
}
.cutline {
    stroke: #606060;
    stroke-width: 4px;
}
.tab {
    height: 239px;
    padding: 23px 3px 24px 0;
    display: flex;
    flex-direction: column;
    align-items: center;
    justify-content: space-between;
    border-bottom: 2px solid #353535;
    color: #c8c8c8;
    font-size: 20px;
    font-weight: 700;
}
.tab span {
    writing-mode: vertical-rl;
    transform: rotate(180deg);
    line-height: 24px;
    white-space: nowrap;
}
.tab svg {
    width: 28px;
    height: 28px;
}
.tab .black {
    color: #000;
}
.tab.active {
    background: #616161;
}
.tab.purple {
    background: linear-gradient(#742872, #5e2692);
    border-bottom-color: #d070e0;
    color: #fff;
}
.tab.purple svg {
    color: #c8b8c8;
}
.light {
    background: #989898;
}
.light .grip {
    background: repeating-linear-gradient(120deg, #d8d8d8 0 3px, #8c8c8c 3px 7px);
}
.light .railmenu {
    background: #a8a8a8;
    color: #000;
}

/* selects with a drawn arrow */
.drop {
    position: relative;
    display: flex;
}
.drop select {
    appearance: none;
    width: 100%;
    outline: 0;
}
.drop svg {
    position: absolute;
    right: 3px;
    top: 12px;
    width: 16px;
    height: 16px;
    pointer-events: none;
}
.search {
    display: flex;
    align-items: center;
    height: 38px;
    background: #262626;
    border: 1px solid #1b1b1b;
}
.search input {
    flex: 1;
    min-width: 0;
    height: 30px;
}
.search svg {
    width: 30px;
    height: 30px;
    margin-right: 4px;
}

/* bins sidebar */
.bins {
    width: 504px;
    background: #333;
    border-right: 3px solid #1a1a1a;
}
.binbar {
    height: 50px;
    display: flex;
    align-items: center;
    justify-content: space-between;
    background: #2e2e2e;
    padding: 0 4px 4px 0;
}
.showall {
    width: 224px;
    height: 40px;
    border: 2px solid #4a4a4a;
    font-size: 20px;
}
.showall select {
    padding-left: 60px;
}
.bins .search {
    margin-right: 2px;
}
.tree {
    list-style: none;
    margin: 0;
    padding: 9px 0 0;
}
.tree li {
    height: 40px;
    display: flex;
    align-items: center;
    padding-left: 15px;
}
.tree svg {
    width: 28px;
    height: 28px;
    margin-right: 15px;
}
.tree .tri {
    width: 16px;
    height: 16px;
    margin-right: 20px;
}
.tree .child {
    padding-left: 89px;
}
.tree li span {
    margin-left: 14px;
}

/* bin window */
.binwin {
    flex: 1301;
    min-width: 0;
    margin-left: 6px;
    display: flex;
    flex-direction: column;
    background: #2e2e2e;
    border: 2px solid #1c1c1c;
    border-top: 3px solid #3a3a3a;
}
.bintitle, .viewbar {
    display: flex;
    align-items: center;
    height: 40px;
    padding-right: 10px;
}
.bintitle {
    gap: 30px;
    padding-right: 16px;
}
.bintitle h2 {
    flex: 1;
    margin: 0;
    padding-left: 31px;
    text-align: center;
    font-size: 20px;
    font-weight: 400;
    color: #c8c8c8;
}
.small {
    width: 20px;
    height: 20px;
}
.mid {
    width: 26px;
    height: 26px;
}
.viewbar {
    justify-content: flex-end;
    margin-bottom: 3px;
}
.view {
    width: 178px;
    height: 40px;
    border: 2px solid #484848;
    font-size: 20px;
    font-weight: 700;
    font-style: italic;
}
.view select {
    padding-left: 12px;
}
.vbtn {
    width: 44px;
    height: 38px;
    color: #d0d0d0;
}
.vbtn svg {
    width: 30px;
    height: 30px;
}
.vbtn.on {
    background: #585858;
}
.binsearch {
    width: 220px;
    margin-left: 2px;
    margin-right: 6px;
}
.cliplist {
    flex: 1;
    overflow: hidden;
    margin: 0 8px 0 6px;
    border-top: 2px solid #1c1c1c;
    background: repeating-linear-gradient(#202020 0 44px, #1e1e1e 44px 88px);
    background-position: 0 46px;
}
.cliplist table {
    width: 100%;
    table-layout: fixed;
    border-collapse: collapse;
}
.c-color { width: 70px; }
.c-icon { width: 60px; }
.c-name { width: 125px; }
.c-dur { width: 142px; }
.c-drive { width: 86px; }
.c-io { width: 142px; }
.c-mark { width: 149px; }
.c-tracks { width: 98px; }
.c-start { width: 151px; }
.c-tape { width: 97px; }
.cliplist thead {
    background: #2e2e2e;
}
.cliplist th {
    height: 46px;
    padding: 0;
    font-size: 20px;
    font-weight: 400;
    background: linear-gradient(#484848, #484848) left center / 2px 30px no-repeat;
}
.cliplist td {
    height: 44px;
    padding: 0 5px;
    font-size: 24px;
    line-height: 32px;
    white-space: nowrap;
    overflow: hidden;
    color: #bdbdbd;
}
.cliplist td svg {
    display: block;
    width: 34px;
    height: 32px;
    margin: 0 auto;
}
.cliplist td i {
    display: block;
    width: 34px;
    height: 28px;
    margin-left: 15px;
    border: 2px solid #151515;
}
.cliplist td.num {
    text-align: right;
    padding-right: 7px;
}
.cliplist td.mark {
    padding-left: 13px;
}
.cliplist .sel td {
    background: #707070;
    color: #333;
}
.cliplist .sel td:first-child {
    background: linear-gradient(90deg, #1e1e1e 11px, #707070 11px);
}
.cliplist .sel i {
    border-color: #4c4c4c;
}
.hscroll {
    display: flex;
    height: 31px;
    margin: 0 8px 3px 6px;
    background: #262626;
    border-top: 3px solid #1c1c1c;
}
.hscroll button {
    width: 28px;
    color: #ddd;
}
.hscroll button svg, .steps svg, .tlscroll svg {
    width: 16px;
    height: 16px;
}
.track {
    flex: 1;
    background: #2d2d2d;
}
.hscroll .thumb {
    width: 35%;
    height: 22px;
    margin-top: 2px;
    background: #686868;
    border-radius: 3px;
}

/* composer */
.composer {
    flex: 1782;
    min-width: 0;
    display: flex;
    flex-direction: column;
    background: #303030;
    border-top: 3px solid #3a3a3a;
    padding: 0 4px 0 12px;
}
.comphead {
    display: flex;
    align-items: center;
    height: 57px;
    padding: 0 57px 0 8px;
}
.clipicon {
    color: #7a7a7a;
    margin-right: 6px;
}
.box {
    height: 39px;
    background: #000;
}
.tall {
    height: 42px;
}
.box svg {
    top: 4px;
    right: 8px;
    color: #d0d0d0;
}
.b1 { flex: 363; }
.b2 { flex: 389; margin-left: 6px; }
.b3 { flex: 389; }
.b4 { flex: 354; margin-left: 6px; }
.green {
    color: #1fe08c;
    font-weight: 700;
    padding-left: 232px;
}
.tc {
    flex: 158;
    height: 42px;
    border: solid #2c2c2c;
    border-width: 0 2px;
    background: #000;
    color: #22c47c;
    font-family: "DejaVu Sans Mono", monospace;
    text-align: center;
    line-height: 40px;
}
.monitors {
    flex: 1;
    display: flex;
    gap: 5px;
}
.monitor {
    flex: 1;
    display: flex;
    flex-direction: column;
}
.screen {
    flex: 1;
    margin-bottom: 8px;
}
.src { background: #0f0f0f; }
.rec { background: #1f1f1f; }
.posbar {
    height: 32px;
    margin-bottom: 6px;
    border-bottom: 2px solid #0b2a1e;
    border-top: 2px solid #161616;
    position: relative;
}
.green-bar {
    background:
        repeating-linear-gradient(90deg, transparent 0 12px, #0e3a28 12px 14px) 16px 100% / 98% 7px no-repeat,
        linear-gradient(90deg, #46a480 16px, #111 16px, #111 18px, transparent 18px),
        linear-gradient(270deg, #46a480 16px, transparent 16px),
        #348a6a;
}
.blue-bar {
    background: #2d587e;
    border-bottom-color: #0e2438;
}
.pos {
    position: absolute;
    left: 41%;
    top: 0;
    bottom: 0;
    width: 4px;
    background: #2effa0;
}
.btnrow {
    display: grid;
    grid-template-columns: repeat(5, 72fr) 164fr repeat(5, 72fr);
    height: 45px;
    margin-bottom: 5px;
    background: #363636;
    color: #868686;
}
.btnrow:last-child {
    margin-bottom: 0;
}

/* timeline */
.timeline {
    display: flex;
    margin: 0 0 7px;
    padding: 11px 0 0 8px;
    background: linear-gradient(#1e1e1e 10px, #2b2b2b 10px);
    border-bottom: 3px solid #060606;
}
.tlmain {
    flex: 1;
    min-width: 0;
    background: #3c3c3c;
}
.tools {
    display: flex;
    align-items: center;
    height: 60px;
    padding-top: 5px;
    background: #2b2b2b;
    border-top: 3px solid #3a3a3a;
    color: #878787;
}
.tools button {
    position: relative;
    width: 64px;
    height: 45px;
}
.tools .spk {
    width: 48px;
    background: #363636;
}
.tools .spk svg {
    width: 30px;
    height: 30px;
}
.meter {
    width: 399px;
    height: 42px;
    background: #000;
    position: relative;
}
.meter span {
    position: absolute;
    top: 8px;
    width: 7px;
    height: 26px;
    background: linear-gradient(#1fd81f 10px, #000 10px 16px, #1fd81f 16px);
}
.meter .lvl {
    left: 35%;
}
.meter .peak {
    right: 14px;
    width: 10px;
    background: linear-gradient(#330000 10px, #000 10px 16px, #330000 16px);
}
.group {
    display: flex;
    background: #363636;
    margin-right: 4px;
}
.first {
    margin-left: 6px;
}
.group.pad {
    padding: 0 64px;
}
.tail {
    width: 258px;
}
.tools .narrow {
    width: 50px;
    color: #525252;
}
.tools .wide {
    width: 72px;
}
.wide svg {
    width: 42px;
}
.group .on {
    background: #555;
    color: #a8a8a8;
}
.more {
    position: relative;
}
.more::after {
    content: "";
    position: absolute;
    right: 1px;
    bottom: 4px;
    border: 4px solid;
    border-color: transparent #ccc #ccc transparent;
}
.ruler {
    display: flex;
    height: 39px;
    background: #2b2b2b;
}
.tcbox {
    width: 180px;
    background: #000;
}
.ruler button {
    width: 32px;
    background: #383838;
    margin-right: 7px;
    color: #909090;
}
.ruler button svg {
    width: 20px;
    height: 20px;
}
.scale {
    flex: 1;
    background: #1b1b1b;
}
.tracks {
    display: flex;
    padding: 53px 12px 53px 100px;
}
.heads {
    width: 112px;
    margin-right: 10px;
    background: #1c1c1c;
    padding: 1px;
}
.head {
    display: grid;
    grid-template-columns: 80px 29px;
    grid-template-rows: 32px 32px;
    gap: 1px;
    margin-bottom: 1px;
}
.head.blank {
    grid-template-rows: 30px;
}
.head span {
    background: #2d2d2d;
}
.head button {
    background: #2d2d2d;
    color: #a0a0a0;
    font-size: 16px;
}
.head .name {
    grid-row: span 2;
    background: #27735a;
    color: #b8c8c0;
    font-size: 20px;
    gap: 4px;
    padding-right: 16px;
}
.head .name svg {
    width: 20px;
    height: 20px;
    color: #8f9a95;
}
.lanes {
    flex: 1;
    min-width: 0;
    position: relative;
    border: 1px solid #1c1c1c;
}
.lane {
    position: relative;
    height: 66px;
    background: #747b85;
    border-top: 2px solid #98a2ae;
    border-bottom: 2px solid #16202c;
}
.lane.dark {
    background: #6a6e76;
    border-top-color: #86888c;
}
.lane.tcstrip {
    height: 31px;
    background: #919191;
    border-top: 3px solid #bdbdbd;
    border-bottom: 2px solid #222;
}
.lane .wave {
    display: block;
    width: 100%;
    height: 62px;
    fill: #262626;
}
.lane span {
    position: absolute;
    left: 11px;
    bottom: 1px;
    color: #f2f2f2;
    font-size: 24px;
    font-weight: 500;
    line-height: 32px;
}
.playhead {
    position: absolute;
    left: 41%;
    margin-left: -14px;
    top: -93px;
    bottom: 0;
    width: 2px;
    background: #30e8a0;
}
.cursor {
    position: absolute;
    left: 41%;
    margin-left: -16px;
    top: -80px;
    width: 22px;
    height: 36px;
}

/* timeline footer */
.bottombar {
    display: flex;
    align-items: center;
    height: 42px;
    padding-bottom: 3px;
    background: #303030;
    color: #8a8a8a;
}
.burger {
    width: 61px;
}
.seqname {
    width: 700px;
    height: 38px;
    background: #000;
    color: #1fe08c;
    font-size: 24px;
    font-weight: 700;
    line-height: 36px;
    text-align: center;
}
.bbtns {
    display: flex;
    padding-left: 3px;
}
.bbtns button {
    width: 46px;
    height: 38px;
}
.bbtns svg {
    width: 28px;
    height: 28px;
}
.bbtns .off {
    background: #282828;
    color: #4a4a4a;
}
.swatch {
    width: 45px;
    height: 38px;
    margin-left: 2px;
    border: 2px solid #484848;
}
.tlview {
    width: 184px;
    height: 38px;
    border: 2px solid #484848;
    border-left: 0;
    font-size: 20px;
    font-style: italic;
    color: #b0b0b0;
}
.tlview select {
    padding-left: 50px;
}
.tlview svg {
    top: 4px;
}
.tlsearch {
    width: 320px;
    color: #b0b0b0;
    padding-left: 6px;
}
.tlsearch .tri {
    width: 16px;
    height: 16px;
    margin-right: 1px;
}
.steps {
    display: flex;
    color: #ccc;
}
.steps button {
    width: 32px;
}
.zoombtn {
    width: 36px;
}
.zoombar {
    width: 262px;
    height: 38px;
    padding: 5px;
    border: 2px solid #1e1e1e;
}
.zoombar .thumb {
    width: 58px;
    height: 24px;
    background: #696969;
}
.tlscroll {
    flex: 1;
    display: flex;
    height: 38px;
    border: 2px solid #1e1e1e;
    color: #ccc;
}
.tlscroll button {
    width: 32px;
}
.tlscroll .track {
    border: solid #1e1e1e;
    border-width: 0 2px;
}
.knob {
    width: 10px;
    height: 10px;
    margin: 0 14px;
    border: 2px solid #444;
    border-radius: 5px;
}

/* task list on the right */
.tasks {
    position: relative;
    width: 145px;
    margin-left: 2px;
    border-left: 2px solid #202020;
    background: #303030;
    display: flex;
    flex-direction: column;
}
.tasks button {
    flex-direction: column;
    height: 208px;
    padding: 0 4px 33px 0;
    justify-content: flex-end;
    gap: 52px;
    font-size: 20px;
    line-height: 28px;
    font-weight: 700;
    color: #c4c4c4;
}
.tasks button svg {
    width: 42px;
    height: 42px;
}
.tasks .line {
    border-top: 2px solid #242424;
    padding-bottom: 27px;
}
.tasks .pointer {
    position: absolute;
    left: 8px;
    top: 185px;
    width: 14px;
    height: 14px;
    color: #ccc;
}
.more-tasks {
    margin-top: auto;
    height: 158px;
    padding: 60px 0 0 57px;
    border-top: 3px solid #252525;
    color: #ccc;
}
.more-tasks svg {
    width: 26px;
    height: 26px;
}

/* channel mark over the corner */
.badge {
    position: absolute;
    right: 80px;
    bottom: 70px;
    width: 213px;
    height: 213px;
    border-radius: 50%;
    display: flex;
    align-items: center;
    justify-content: center;
    background: radial-gradient(#fff 60%, #ececec);
}
.badge svg {
    width: 104px;
    height: 72px;
}
```

FILE: script.js
```js
// audio peaks: [start, end, up, down] on a 3410 wide clip, 29 is full scale
const peaks = {
    loud: {
        base: 4,
        list: [
            [6, 60, 13, 13], [144, 152, 29, 29], [152, 164, 9, 9], [193, 199, 11, 8], [226, 233, 11, 9],
            [248, 282, 15, 20], [298, 350, 11, 12], [372, 388, 8, 8], [487, 492, 29, 29], [526, 550, 13, 13],
            [582, 594, 16, 12], [636, 668, 14, 13], [681, 738, 29, 29], [738, 748, 14, 12], [800, 846, 14, 14],
            [856, 886, 11, 10], [990, 1010, 10, 9], [996, 1003, 14, 13], [1034, 1086, 12, 12], [1150, 1176, 6, 6],
            [1232, 1240, 18, 19], [1240, 1276, 28, 28], [1276, 1292, 20, 22], [1350, 1372, 7, 7],
            [1386, 1393, 29, 29], [1393, 1398, 10, 10], [1539, 1546, 24, 29], [1546, 1556, 8, 8],
            [1578, 1640, 11, 10], [1582, 1586, 17, 15], [1640, 1676, 11, 10],
            [1706, 1718, 11, 11], [1796, 1805, 29, 29], [1814, 1835, 29, 29], [2010, 2080, 9, 8],
            [2150, 2180, 6, 6], [2650, 2690, 6, 6], [2830, 2838, 11, 11], [2845, 2885, 10, 10],
            [3000, 3062, 17, 17], [3072, 3082, 12, 10], [3112, 3160, 12, 12], [3124, 3129, 24, 14],
            [3168, 3192, 11, 10], [3230, 3258, 8, 7], [3306, 3316, 12, 10], [3318, 3352, 23, 20],
            [3345, 3398, 26, 27]
        ]
    },
    soft: {
        base: 1,
        list: [
            [504, 552, 8, 8], [582, 604, 18, 21], [614, 620, 8, 8], [636, 642, 28, 28], [648, 662, 29, 29],
            [666, 672, 20, 26], [675, 700, 21, 18], [856, 868, 6, 7], [1190, 1206, 5, 5],
            [1670, 1680, 11, 11], [1688, 1692, 6, 6], [1702, 1706, 5, 5], [1737, 1747, 20, 22],
            [1760, 1768, 14, 14], [1775, 1790, 23, 24], [1790, 1806, 8, 7], [2110, 2240, 3, 3],
            [2528, 2536, 6, 6], [3000, 3010, 12, 14], [3052, 3057, 10, 14], [3114, 3190, 5, 5],
            [3140, 3148, 8, 10], [3228, 3256, 8, 8], [3306, 3316, 8, 9], [3320, 3340, 10, 10],
            [3342, 3366, 13, 13], [3370, 3400, 14, 14]
        ]
    }
};

function wavePath(kind, seed) {
    let n = seed * 7919;
    const rnd = () => {
        n = (n * 16807 + 11) % 2147483647;
        return n / 2147483647;
    };
    const { base, list } = peaks[kind];
    let top = '';
    let bottom = '';
    for (let x = 0; x <= 3410; x += 2) {
        let up = base * (0.5 + rnd() * 0.6);
        let down = base * (0.5 + rnd() * 0.6);
        if (rnd() > 0.8) {
            up += 1 + rnd() * 3;
            down += 1 + rnd() * 3;
        }
        for (const [a, b, u, d] of list) {
            if (x < a || x > b) continue;
            // full scale parts are clipped flat, the rest is ragged
            if (u === 29) {
                up = down = x - a < 2 || b - x < 2 ? 24 : 29;
                continue;
            }
            const t = 1 - Math.abs((x - a) / (b - a) * 2 - 1);
            const k = Math.min(1, 0.55 + t * 0.7);
            up = Math.max(up, u * k * (0.5 + rnd() * 0.6));
            down = Math.max(down, d * k * (0.5 + rnd() * 0.6));
        }
        top += `L${x} ${(31 - Math.min(up, 29)).toFixed(1)}`;
        bottom = `L${x} ${(31 + Math.min(down, 29)).toFixed(1)}` + bottom;
    }
    return 'M0 31' + top + bottom + 'Z';
}

document.querySelectorAll('[data-wave]').forEach(lane => {
    lane.insertAdjacentHTML('afterbegin',
        `<svg class="wave" viewBox="0 0 3410 62" preserveAspectRatio="none"><path d="${wavePath(lane.dataset.wave, +lane.dataset.seed)}"/></svg>`);
});
```
